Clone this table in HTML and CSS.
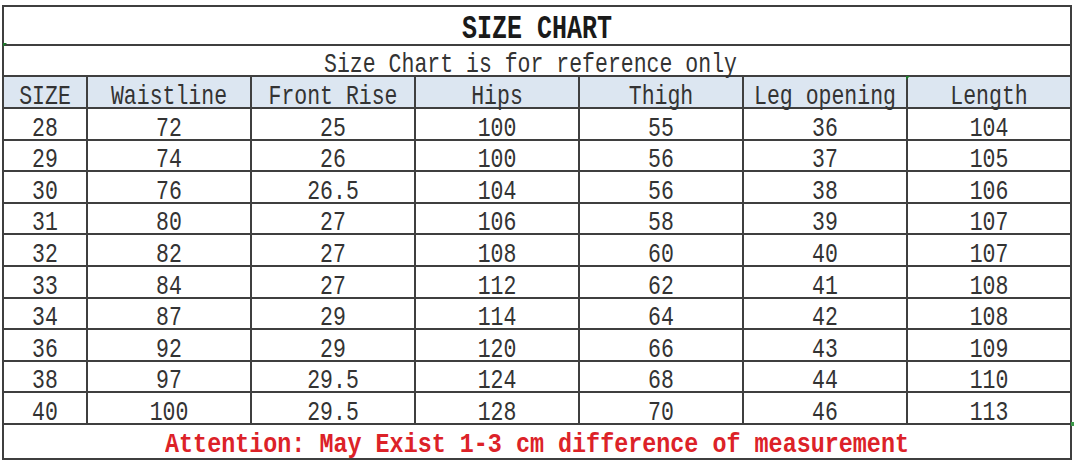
FILE: index.html
```html
<!DOCTYPE html>
<html>
<head>
<meta charset="utf-8">
<link rel="stylesheet" href="styles.css">
</head>
<body>
<div class="sheet">
  <table class="chart">
    <colgroup>
      <col class="c-size"><col class="c"><col class="c"><col class="c"><col class="c"><col class="c"><col class="c">
    </colgroup>
    <tr class="r-title"><td colspan="7"><span class="t">SIZE CHART</span></td></tr>
    <tr class="r-sub"><td colspan="7"><span class="t sub">Size Chart is for reference only</span></td></tr>
    <tr class="r-head">
      <td><span class="t">SIZE</span></td><td><span class="t">Waistline</span></td><td><span class="t">Front Rise</span></td><td><span class="t">Hips</span></td><td><span class="t">Thigh</span></td><td><span class="t">Leg opening</span></td><td><span class="t">Length</span></td>
    </tr>
    <tr class="r-data"><td><span class="t">28</span></td><td><span class="t">72</span></td><td><span class="t">25</span></td><td><span class="t">100</span></td><td><span class="t">55</span></td><td><span class="t">36</span></td><td><span class="t">104</span></td></tr>
    <tr class="r-data"><td><span class="t">29</span></td><td><span class="t">74</span></td><td><span class="t">26</span></td><td><span class="t">100</span></td><td><span class="t">56</span></td><td><span class="t">37</span></td><td><span class="t">105</span></td></tr>
    <tr class="r-data"><td><span class="t">30</span></td><td><span class="t">76</span></td><td><span class="t">26.5</span></td><td><span class="t">104</span></td><td><span class="t">56</span></td><td><span class="t">38</span></td><td><span class="t">106</span></td></tr>
    <tr class="r-data"><td><span class="t">31</span></td><td><span class="t">80</span></td><td><span class="t">27</span></td><td><span class="t">106</span></td><td><span class="t">58</span></td><td><span class="t">39</span></td><td><span class="t">107</span></td></tr>
    <tr class="r-data"><td><span class="t">32</span></td><td><span class="t">82</span></td><td><span class="t">27</span></td><td><span class="t">108</span></td><td><span class="t">60</span></td><td><span class="t">40</span></td><td><span class="t">107</span></td></tr>
    <tr class="r-data"><td><span class="t">33</span></td><td><span class="t">84</span></td><td><span class="t">27</span></td><td><span class="t">112</span></td><td><span class="t">62</span></td><td><span class="t">41</span></td><td><span class="t">108</span></td></tr>
    <tr class="r-data"><td><span class="t">34</span></td><td><span class="t">87</span></td><td><span class="t">29</span></td><td><span class="t">114</span></td><td><span class="t">64</span></td><td><span class="t">42</span></td><td><span class="t">108</span></td></tr>
    <tr class="r-data"><td><span class="t">36</span></td><td><span class="t">92</span></td><td><span class="t">29</span></td><td><span class="t">120</span></td><td><span class="t">66</span></td><td><span class="t">43</span></td><td><span class="t">109</span></td></tr>
    <tr class="r-data"><td><span class="t">38</span></td><td><span class="t">97</span></td><td><span class="t">29.5</span></td><td><span class="t">124</span></td><td><span class="t">68</span></td><td><span class="t">44</span></td><td><span class="t">110</span></td></tr>
    <tr class="r-data"><td><span class="t">40</span></td><td><span class="t">100</span></td><td><span class="t">29.5</span></td><td><span class="t">128</span></td><td><span class="t">70</span></td><td><span class="t">46</span></td><td><span class="t">113</span></td></tr>
    <tr class="r-foot"><td colspan="7"><span class="t">Attention: May Exist 1-3 cm difference of measurement</span></td></tr>
  </table>
  <span class="mark mark-a"></span>
  <span class="mark mark-b"></span>
  <span class="mark mark-c"></span>
</div>
</body>
</html>
```
FILE: styles.css
```css
html, body {
  margin: 0;
  padding: 0;
  background: #ffffff;
}
.sheet {
  position: relative;
  padding: 5px 0 0 2px;
}
.chart {
  border-collapse: collapse;
  table-layout: fixed;
  width: 1070px;
  font-family: "Liberation Mono", "Courier New", monospace;
  color: #333333;
}
.c-size { width: 84px; }
.c { width: 164px; }
.chart td {
  border: 2px solid #3f3f3f;
  padding: 0;
  text-align: center;
  vertical-align: middle;
  font-size: 21.5px;
  line-height: 1;
  white-space: nowrap;
}
.t {
  display: inline-block;
  transform: scaleY(1.3);
}
.r-title { height: 39px; }
.r-title td {
  font-size: 25px;
  font-weight: bold;
  color: #1a1a1a;
}
.r-title .t { padding-top: 5px; }
.r-sub { height: 31px; }
.r-sub .sub { padding-right: 13px; padding-top: 7px; }
.r-head { height: 32px; }
.r-head td { background: #dce6f1; }
.r-head .t { padding-top: 7px; }
.r-data { height: 31.6px; }
.r-data .t { padding-top: 7px; }
.r-foot { height: 35px; }
.r-foot td {
  font-size: 23.4px;
  font-weight: bold;
  color: #dc2228;
}
.r-foot .t { transform: scaleY(1.15); padding-top: 9px; }
.mark {
  position: absolute;
  width: 0;
  height: 0;
}
.mark-a {
  left: 3px;
  top: 43px;
  border-top: 4px solid #1f7a2a;
  border-right: 4px solid transparent;
}
.mark-b {
  left: 906px;
  top: 76px;
  border-top: 4px solid #1f7a2a;
  border-right: 4px solid transparent;
}
.mark-c {
  left: 1071px;
  top: 422px;
  width: 3px;
  height: 4px;
  background: #3d9a4a;
}
```
